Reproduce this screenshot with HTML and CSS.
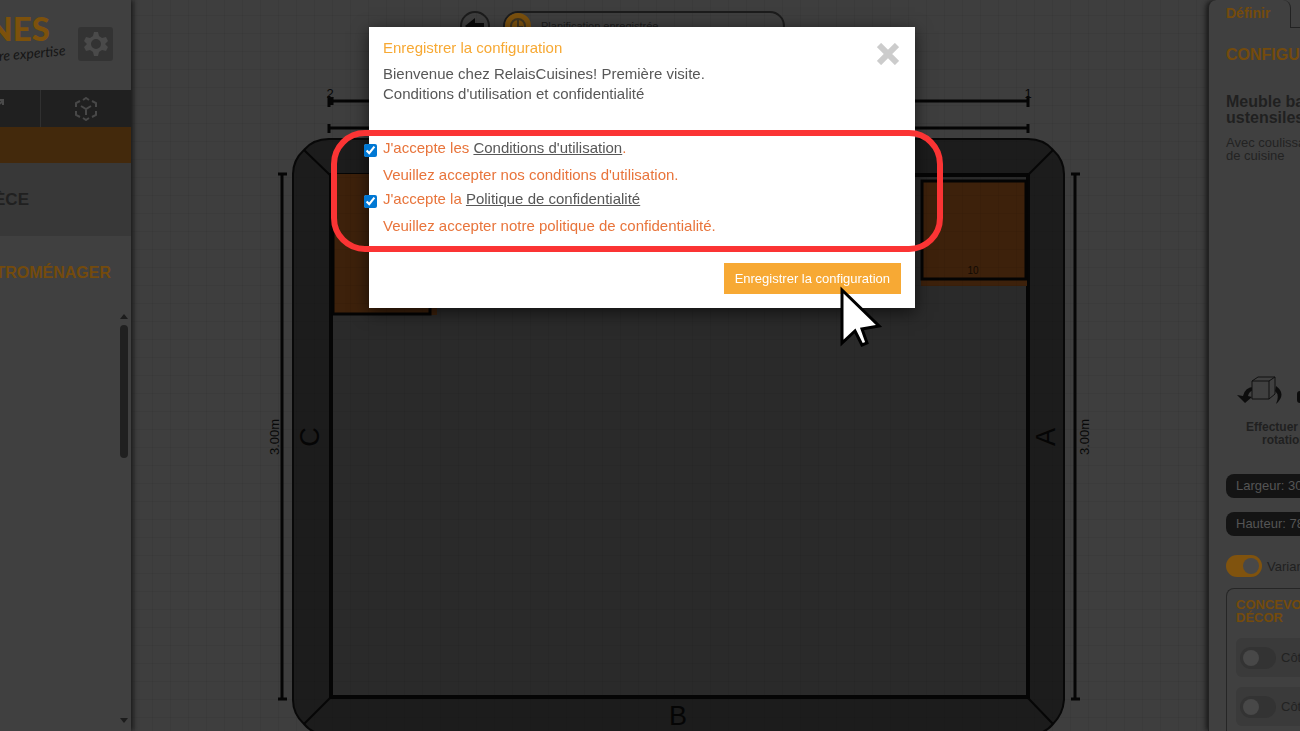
FILE: index.html
```html
<!DOCTYPE html>
<html lang="fr">
<head>
    <meta charset="UTF-8">
    <meta name="viewport" content="width=device-width, initial-scale=1.0">
    <title>RelaisCuisines</title>
    <link rel="stylesheet" href="styles.css">
</head>
<body>
    <div class="app">
        <aside class="sidebar">
            <header class="brand">
                <div class="logo">
                    <span class="logo-name">CUISINES</span>
                    <span class="logo-slogan">votre expertise</span>
                </div>
                <button class="settings" aria-label="Paramètres">
                    <svg width="24" height="26" viewBox="0 0 24 26">
                        <path fill="#4a4a4a" fill-rule="evenodd" d="M9 5L10 1h4l1 4 3 2 4-1 2 4-3 3 3 3-2 4-4-1-3 2-1 4h-4l-1-4-3-2-4 1-2-4 3-3-3-3 2-4 4 1zM12 8a5 5 0 1 0 0 10 5 5 0 1 0 0-10z"/>
                    </svg>
                </button>
            </header>

            <nav class="view-switch">
                <button class="view-btn view-2d" aria-label="Vue 2D">
                    <svg width="4" height="8" viewBox="0 0 4 8"><path d="M0 1h3v5M3 1L0 5" fill="none" stroke="#4a4a4a" stroke-width="2"/></svg>
                </button>
                <button class="view-btn view-3d" aria-label="Vue 3D">
                    <svg width="24" height="24" viewBox="0 0 24 24" fill="none" stroke="#484848" stroke-width="2">
                        <path d="M9 3l3-2 3 2M18 4l4 2v4M22 14v4l-4 2M15 21l-3 2-3-2M6 20l-4-2v-4M2 10V6l4-2M7 9l5 3 5-3M12 12v6"/>
                    </svg>
                </button>
            </nav>

            <div class="active-bar"></div>
            <div class="room-title"><span>PIÈCE</span></div>
            <h2 class="category"><span>ÉLECTROMÉNAGER</span></h2>

            <div class="scroll-area">
                <div class="scrollbar">
                    <i class="arrow-up"></i>
                    <i class="thumb"></i>
                    <i class="arrow-down"></i>
                </div>
            </div>
        </aside>

        <main class="planner">
            <!-- Plan de la pièce -->
            <svg class="plan" viewBox="131 0 1077 731" preserveAspectRatio="xMidYMin slice">
                <defs>
                    <pattern id="grid" width="18" height="18" patternUnits="userSpaceOnUse">
                        <path d="M0 15.5h18M8.5 0v18" stroke="#000" stroke-opacity=".05" fill="none"/>
                    </pattern>
                </defs>
                <rect x="131" width="1077" height="731" fill="#3e3e3e"/>

                <!-- Murs -->
                <path d="M329 139H1028Q1044 139 1053 150Q1064 160 1064 174V700Q1063 714 1053 724Q1044 735 1028 735H329Q313 735 304 724Q293 714 293 700V174Q293 160 304 150Q313 139 329 139Z" fill="#1c1c1c" stroke="#080808" stroke-width="2"/>
                <rect x="331" y="175" width="697" height="522" fill="#2a2a2a" stroke="#050505" stroke-width="4"/>
                <path d="M304 150l26 25M1053 150l-25 25M304 724l26-26M1053 724l-25-26" stroke="#060606" stroke-width="2"/>

                <!-- Meubles -->
                <rect x="333" y="174" width="104" height="141" fill="#3d210b"/>
                <path d="M333 174V314H430V300" fill="none" stroke="#040404" stroke-width="3"/>
                <rect x="921" y="180" width="106" height="106" fill="#3d210b"/>
                <rect x="922" y="181" width="104" height="98" fill="#3d210b" stroke="#040404" stroke-width="3"/>
                <text x="973" y="274" class="unit-label">10</text>

                <rect x="131" width="1077" height="731" fill="url(#grid)"/>

                <!-- Cotes -->
                <g stroke="#050505" stroke-width="3" fill="none">
                    <path d="M329 101H1028M329 96v11M332 97v8M1028 96v11"/>
                    <path d="M329 128H1028M329 124v9M1028 124v9"/>
                    <path d="M282 174V699M278 174h9M278 699h9"/>
                    <path d="M1075 174V699M1071 174h9M1071 699h9"/>
                </g>
                <g class="dims">
                    <text x="330" y="98">2</text>
                    <text x="1028" y="98">1</text>
                    <text transform="translate(279 437) rotate(-90)">3.00m</text>
                    <text transform="translate(1089 437) rotate(-90)">3.00m</text>
                </g>
                <g class="walls">
                    <text transform="translate(319 437) rotate(-90)">C</text>
                    <text transform="translate(1055 437) rotate(-90)">A</text>
                    <text x="678" y="725">B</text>
                </g>
            </svg>

            <div class="planner-bar">
                <button class="back" aria-label="Retour">
                    <svg width="20" height="16" viewBox="0 0 20 16"><path d="M0 8l10-8v5h9v6h-9v5z" fill="#0a0a0a"/></svg>
                </button>
                <div class="status">
                    <span class="status-icon">
                        <svg width="18" height="18" viewBox="0 0 18 18" fill="none" stroke="#3f3420" stroke-width="2"><circle cx="9" cy="9" r="7"/><path d="M9 3v7h5"/></svg>
                    </span>
                    <span>Planification enregistrée</span>
                </div>
            </div>
        </main>

        <aside class="config">
            <div class="tabs">
                <button class="tab">Définir</button>
                <span class="tab-next"></span>
            </div>
            <div class="config-body">
                <h2 class="config-title">CONFIGURATION</h2>
                <h3 class="product">Meuble bas<br>ustensiles</h3>
                <p class="product-info">Avec coulissants<br>de cuisine</p>

                <div class="rotation">
                    <button class="rotate-btn">
                        <svg width="48" height="32" viewBox="0 0 48 32">
                            <path d="M18 12Q9 12 7 21L1 20l8 8 7-6-4-1q1-5 6-6z" fill="#0d0d0d"/>
                            <path d="M40 11q11 8 0 18 4-9-1-13z" fill="#0d0d0d"/>
                            <path d="M16 6h17v18H16zM16 6l6-4h17l-6 4M39 2v17l-6 5" fill="#404040" stroke="#111" stroke-width="1"/>
                        </svg>
                        <span>Effectuer une<br>rotation</span>
                    </button>
                    <i class="rotate-next"></i>
                </div>

                <div class="size">Largeur: 30 cm</div>
                <div class="size">Hauteur: 78 cm</div>

                <label class="option">
                    <input type="checkbox" class="toggle" checked>
                    <span>Variante</span>
                </label>

                <section class="decor">
                    <h4>CONCEVOIR<br>DÉCOR</h4>
                    <label class="side"><input type="checkbox" class="toggle"><span>Côté</span></label>
                    <label class="side"><input type="checkbox" class="toggle"><span>Côté</span></label>
                </section>
            </div>
        </aside>
    </div>

    <div class="modal" role="dialog" aria-labelledby="modalTitle">
        <button class="close" aria-label="Fermer">
            <svg width="22" height="22" viewBox="0 0 22 22"><path d="M2 2l18 18M20 2L2 20" stroke="#ccc" stroke-width="6"/></svg>
        </button>
        <h1 id="modalTitle">Enregistrer la configuration</h1>
        <p class="intro">Bienvenue chez RelaisCuisines! Première visite.<br>Conditions d'utilisation et confidentialité</p>

        <form class="consent">
            <div class="consent-row">
                <input type="checkbox" id="terms" checked>
                <label for="terms">J'accepte les <a href="#">Conditions d'utilisation</a>.</label>
            </div>
            <p class="error">Veuillez accepter nos conditions d'utilisation.</p>
            <div class="consent-row">
                <input type="checkbox" id="privacy" checked>
                <label for="privacy">J'accepte la <a href="#">Politique de confidentialité</a></label>
            </div>
            <p class="error">Veuillez accepter notre politique de confidentialité.</p>
            <button type="button" class="save">Enregistrer la configuration</button>
        </form>
    </div>

    <div class="highlight"></div>
    <svg class="cursor" width="44" height="62" viewBox="0 0 44 62">
        <path d="M4 4V57L17 45L24 59L29 57L24 43L41 40Z" fill="#fff" stroke="#000" stroke-width="3"/>
    </svg>
</body>
</html>
```

FILE: styles.css
```css
:root {
    --bg: #404040;
    --dark: #202020;
    --orange: #744b0c;
    --accent: #f7a934;
    --error: #e8743b;
    --text: #575757;
}

* {
    box-sizing: border-box;
}

body {
    margin: 0;
    font-family: "Liberation Sans", Arial, sans-serif;
    font-size: 14px;
    background: var(--bg);
    overflow: hidden;
}

h1, h2, h3, h4, p {
    margin: 0;
}

button {
    font-family: inherit;
    border: none;
    padding: 0;
    background: none;
    cursor: pointer;
}

svg {
    display: block;
    flex: none;
}

.app {
    display: grid;
    grid-template-columns: 131px 1fr 92px;
    grid-template-rows: minmax(0, 1fr);
    height: 100vh;
}

/* Colonne de gauche */
.sidebar {
    display: flex;
    flex-direction: column;
    min-width: 0;
    background: var(--bg);
    box-shadow: 2px 0 5px #181818;
    z-index: 1;
}

.brand {
    display: flex;
    align-items: flex-start;
    justify-content: flex-end;
    gap: 12px;
    height: 90px;
    padding: 9px 18px 0 0;
    overflow: hidden;
}

.logo {
    display: flex;
    flex: none;
    flex-direction: column;
    align-items: flex-end;
}

.logo-name {
    padding-right: 16px;
    font: 900 33px/38px Lato, sans-serif;
    color: #7c510c;
}

.logo-slogan {
    font: italic 14px/14px Lato, sans-serif;
    color: #151515;
    white-space: nowrap;
    transform: rotate(-5deg);
}

.settings {
    display: flex;
    flex: none;
    align-items: center;
    justify-content: center;
    width: 35px;
    height: 34px;
    margin-top: 18px;
    border-radius: 3px;
    background: #333;
}

.view-switch {
    display: flex;
    height: 37px;
    background: var(--dark);
}

.view-btn {
    display: flex;
    align-items: center;
}

.view-2d {
    width: 41px;
    padding-bottom: 12px;
    border-right: 1px solid #303030;
}

.view-3d {
    flex: 1;
    justify-content: center;
}

.active-bar {
    height: 36px;
    background: #43290c;
}

.room-title {
    display: flex;
    align-items: center;
    justify-content: flex-end;
    height: 73px;
    padding-right: 102px;
    overflow: hidden;
    background: #383838;
    color: #202020;
    font-size: 17px;
    font-weight: bold;
}

.category {
    display: flex;
    align-items: center;
    justify-content: flex-end;
    height: 73px;
    padding-right: 20px;
    overflow: hidden;
    color: var(--orange);
    font-size: 16px;
}

.scroll-area {
    display: flex;
    flex: 1;
    justify-content: flex-end;
    padding: 5px 3px 8px 0;
}

.scrollbar {
    display: flex;
    flex-direction: column;
    align-items: center;
    width: 8px;
}

.arrow-up,
.arrow-down {
    border: 4px solid transparent;
}

.arrow-up {
    border-top: 0;
    border-bottom: 5px solid #1c1c1c;
}

.arrow-down {
    margin-top: auto;
    border-bottom: 0;
    border-top: 5px solid #1c1c1c;
}

.thumb {
    width: 8px;
    height: 133px;
    margin-top: 6px;
    border-radius: 4px;
    background: #202020;
}

/* Zone du plan */
.planner {
    position: relative;
    min-width: 0;
    overflow: hidden;
}

.plan {
    width: 100%;
    height: 100%;
}

.dims text,
.walls text,
.unit-label {
    text-anchor: middle;
}

.dims text {
    font-size: 13px;
    fill: #080808;
}

.walls text {
    font-size: 27px;
    fill: #050505;
}

.unit-label {
    font-size: 10px;
    fill: #120a03;
}

.planner-bar {
    position: absolute;
    top: 11px;
    left: 329px;
    display: flex;
    gap: 13px;
}

.back {
    display: flex;
    align-items: center;
    justify-content: center;
    width: 30px;
    height: 30px;
    border: 2px solid #1c1c1c;
    border-radius: 50%;
}

.status {
    display: flex;
    align-items: center;
    gap: 10px;
    width: 282px;
    height: 30px;
    border: 2px solid #1c1c1c;
    border-radius: 15px;
    color: #1c1c1c;
    font-size: 11px;
}

.status-icon {
    display: flex;
    align-items: center;
    justify-content: center;
    width: 26px;
    height: 26px;
    border-radius: 50%;
    background: #7a500e;
}

/* Colonne de droite */
.config {
    min-width: 0;
    overflow: hidden;
    background: var(--bg);
    border-left: 1px solid #222;
    border-top-left-radius: 8px;
    box-shadow: -2px 0 5px #181818;
    white-space: nowrap;
    z-index: 1;
}

.tabs {
    display: flex;
    height: 28px;
}

.tab {
    width: 82px;
    color: var(--orange);
    font-size: 14px;
    font-weight: bold;
    text-align: left;
    padding: 0 0 2px 17px;
    border-right: 1px solid #222;
    border-top-right-radius: 8px;
}

.tab-next {
    flex: 1;
    border-bottom: 1px solid #222;
    border-top-left-radius: 8px;
}

.config-body {
    display: flex;
    flex-direction: column;
    padding: 17px 0 0 17px;
}

.config-title {
    color: var(--orange);
    font-size: 16px;
    line-height: 20px;
}

.product {
    margin-top: 29px;
    color: #202020;
    font-size: 16px;
    line-height: 16px;
}

.product-info {
    margin-top: 10px;
    color: #232323;
    font-size: 13px;
    line-height: 13px;
}

.rotation {
    display: flex;
    margin-top: 213px;
}

.rotate-btn {
    display: flex;
    flex-direction: column;
    gap: 14px;
    margin-left: 10px;
    color: #202020;
    font-size: 12px;
    font-weight: bold;
    line-height: 13px;
}

.rotate-btn span {
    padding-left: 10px;
}

.rotate-next {
    position: absolute;
    right: 0;
    width: 3px;
    height: 12px;
    margin-top: 16px;
    border-radius: 6px 0 0 6px;
    background: #0d0d0d;
}

.size {
    height: 24px;
    padding-left: 10px;
    border-radius: 8px 0 0 8px;
    background: #141414;
    color: #555;
    font-size: 13px;
    line-height: 24px;
    margin-bottom: 14px;
}

.rotation + .size {
    margin-top: 27px;
}

.option {
    display: flex;
    align-items: center;
    gap: 5px;
    margin-top: 5px;
    color: #202020;
    font-size: 13px;
}

.toggle {
    flex: none;
    display: flex;
    align-items: center;
    appearance: none;
    width: 36px;
    height: 22px;
    margin: 0;
    padding: 0 3px;
    border-radius: 11px;
    background: #333;
}

.toggle::before {
    content: "";
    width: 16px;
    height: 16px;
    border-radius: 50%;
    background: #484848;
}

.toggle:checked {
    justify-content: flex-end;
    background: #80530e;
}

.decor {
    display: flex;
    flex-direction: column;
    gap: 10px;
    height: 160px;
    margin-top: 11px;
    padding: 9px 0 0 9px;
    border: 1px solid #262626;
    border-right: 0;
    border-radius: 8px 0 0 0;
}

.decor h4 {
    margin-bottom: 4px;
    color: var(--orange);
    font-size: 13px;
    line-height: 13px;
}

.side {
    display: flex;
    align-items: center;
    gap: 5px;
    height: 39px;
    padding-left: 4px;
    border-radius: 6px 0 0 6px;
    background: #3a3a3a;
    color: #222;
    font-size: 13px;
}

/* Fenêtre d'enregistrement */
.modal {
    position: fixed;
    top: 27px;
    left: 369px;
    z-index: 10;
    width: 546px;
    padding: 12px 14px 14px;
    background: #fff;
    box-shadow: 0 4px 16px rgba(0, 0, 0, 0.6);
    color: var(--text);
    font-size: 15px;
    line-height: 20px;
}

.modal h1 {
    color: var(--accent);
    font-size: 15px;
    font-weight: normal;
    line-height: 18px;
}

.close {
    position: absolute;
    top: 16px;
    right: 16px;
}

.intro {
    margin-top: 7px;
}

.consent {
    display: flex;
    flex-direction: column;
    margin-top: 34px;
    color: var(--error);
}

.consent-row {
    display: flex;
    align-items: center;
    gap: 6px;
    height: 20px;
    margin-left: -19px;
}

.consent-row input {
    width: 13px;
    height: 13px;
    margin: 5px 0 0;
    accent-color: #0078d4;
}

.consent-row a {
    color: var(--text);
}

.error {
    margin: 7px 0 4px;
}

.save {
    align-self: flex-end;
    margin-top: 23px;
    padding: 0 11px;
    height: 31px;
    background: var(--accent);
    color: #fff;
    font-size: 13px;
}

.highlight {
    position: fixed;
    top: 130px;
    left: 331px;
    z-index: 11;
    width: 612px;
    height: 122px;
    border: 6px solid #fb3434;
    border-radius: 34px;
    pointer-events: none;
}

.cursor {
    position: fixed;
    top: 286px;
    left: 838px;
    z-index: 12;
    pointer-events: none;
}
```
